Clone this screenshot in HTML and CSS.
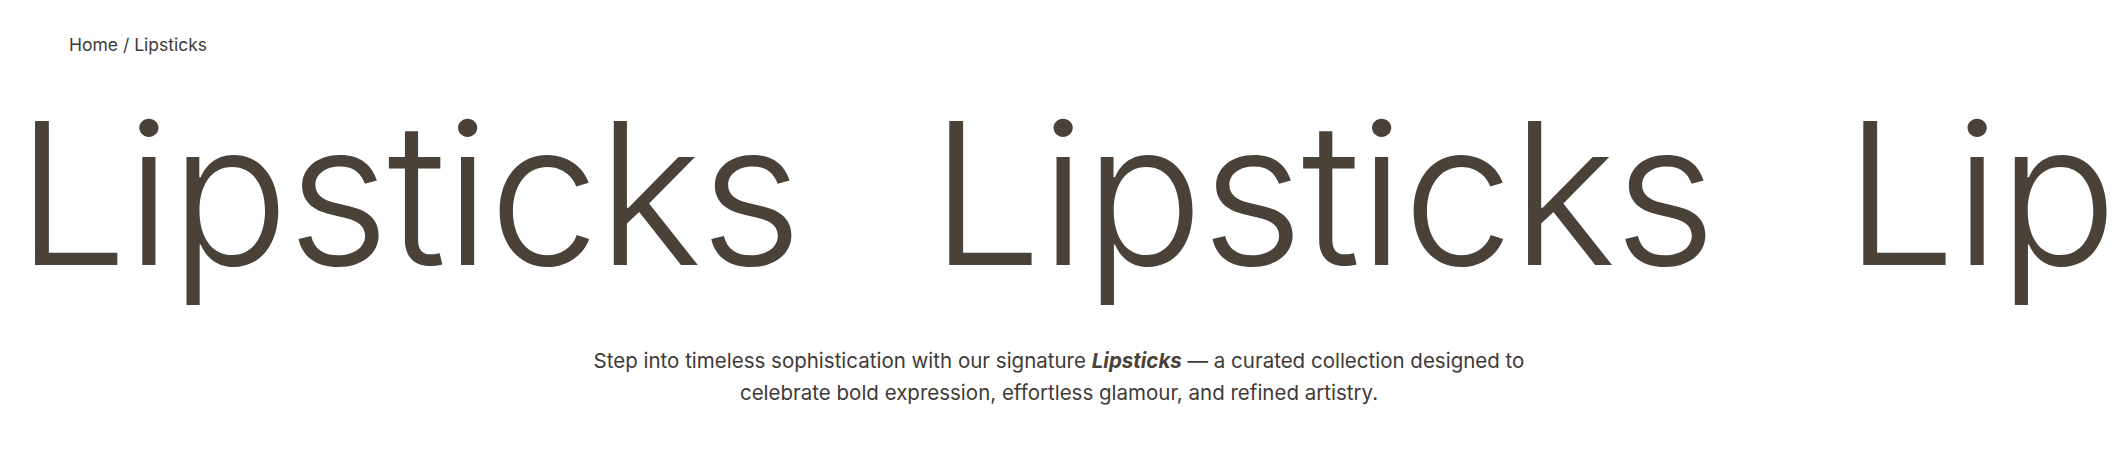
FILE: index.html
```html
<!DOCTYPE html>
<html lang="en">
<head>
<meta charset="utf-8">
<title>Lipsticks</title>
<link rel="stylesheet" href="styles.css">
</head>
<body>
<nav class="breadcrumb"><a href="#">Home</a> / <span>Lipsticks</span></nav>
<div class="marquee">
  <div class="track">
    <span class="word">Lipsticks</span>
    <span class="word">Lipsticks</span>
    <span class="word">Lipsticks</span>
    <span class="word">Lipsticks</span>
  </div>
</div>
<p class="intro">Step into timeless sophistication with our signature <strong><em>Lipsticks</em></strong> — a curated collection designed to celebrate bold expression, effortless glamour, and refined artistry.</p>
</body>
</html>
```
FILE: styles.css
```css
html, body {
  margin: 0;
  padding: 0;
  background: #ffffff;
}
body {
  font-family: Inter, "Noto Sans", sans-serif;
  color: #4a4239;
  width: 2118px;
  overflow: hidden;
}
.breadcrumb {
  padding: 34px 0 0 69px;
  font-size: 17.5px;
  line-height: 22px;
  color: #3d3a3a;
}
.breadcrumb a {
  color: inherit;
  text-decoration: none;
}
.marquee {
  overflow: hidden;
  margin-top: 7px;
  padding-bottom: 22px;
}
.track {
  display: flex;
  gap: 130px;
  padding-left: 16px;
  white-space: nowrap;
}
.word {
  font-size: 198px;
  font-weight: 300;
  line-height: 260px;
  letter-spacing: -2px;
  color: #4a4239;
  flex: none;
}
.intro {
  margin: 0 auto;
  max-width: 970px;
  text-align: center;
  font-size: 20.5px;
  line-height: 32px;
  color: #3f3a36;
}
.intro strong {
  font-weight: 700;
  color: #4a4239;
}
```
